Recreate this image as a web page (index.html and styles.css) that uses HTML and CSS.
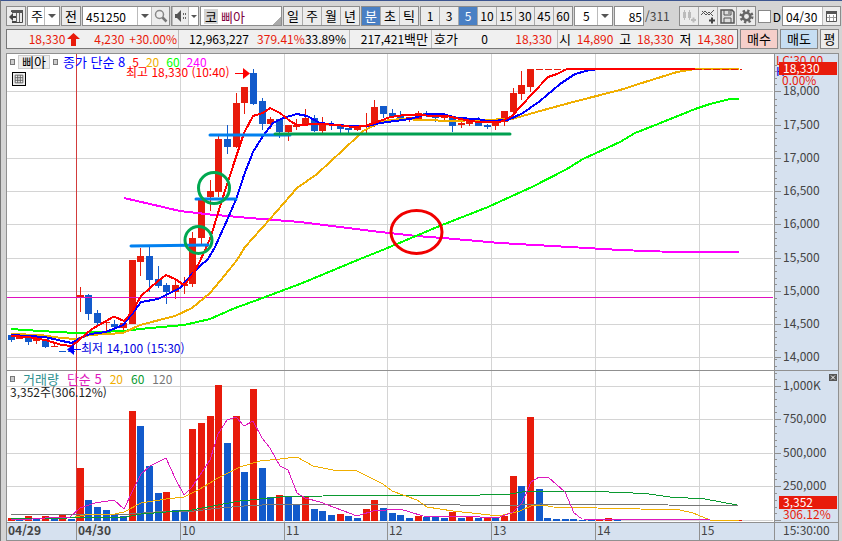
FILE: index.html
```html
<!DOCTYPE html>
<html lang="ko">
<head>
    <meta charset="UTF-8">
    <meta name="viewport" content="width=device-width, initial-scale=1.0">
    <title>삐아 5분 차트</title>
    <link rel="stylesheet" href="styles.css">
</head>
<body>
    <div class="window">
        <!-- 도구 모음 -->
        <div class="toolbar">
            <button class="btn icon-btn first" aria-label="목록 열기">
                <svg width="16" height="16" viewBox="0 0 16 16"><path d="M3.500 4V2.500H14.500V14.500H8" fill="none" stroke="#444" stroke-width="1"/><path d="M4 2h11v3H4z" fill="#555"/><path d="M11.500 5v9M8.500 5v9" stroke="#666"/><path d="M1 9l4-4v8zM5 8h3v2H5zM4 13h4v2H4z" fill="#444"/></svg>
            </button>
            <span class="combo period"><select aria-label="주기"><option>주</option></select></span>
            <button class="btn prev">전</button>
            <span class="code-box">
                <input class="code" type="text" value="451250" aria-label="종목코드">
                <button class="drop" aria-label="종목 목록"></button>
                <button class="flat" aria-label="검색">
                    <svg width="16" height="16" viewBox="0 0 16 16"><circle cx="6.500" cy="6.500" r="4" fill="#eee" stroke="#888" stroke-width="1.500"/><path d="M9.500 9.500l4 4" stroke="#777" stroke-width="2.500"/></svg>
                </button>
            </span>
            <span class="sound-box">
                <button class="flat" aria-label="소리">
                    <svg width="14" height="14" viewBox="0 0 14 14"><path d="M1 5h2l4-4v12L3 9H1z" fill="#555"/><path d="M9 4h1v2H9zM9 8h1v2H9zM11 4h1v2h-1zM11 8h1v2h-1z" fill="#666"/></svg>
                </button>
                <button class="drop small" aria-label="소리 설정"></button>
            </span>
            <span class="stock"><b class="market">코</b><span>삐아</span></span>
            <div class="group">
                <button>일</button><button>주</button><button>월</button><button>년</button>
            </div>
            <div class="group">
                <button class="on">분</button><button>초</button><button>틱</button>
            </div>
            <div class="group nums">
                <button>1</button><button>3</button><button class="on">5</button><button>10</button><button>15</button><button>30</button><button>45</button><button>60</button>
            </div>
            <span class="combo minute"><select aria-label="분 간격"><option>5</option></select></span>
            <input class="count" type="text" value="85" aria-label="표시 봉 수">
            <span class="total">/311</span>
            <div class="group icons">
                <button aria-label="봉 추가">
                    <svg width="17" height="17" viewBox="0 0 17 17"><path d="M3.500 2v10M8.500 2v10" stroke="#bbb"/><path d="M2 4h3v6H2zM7 4h3v6H7z" fill="#bbb"/><path d="M10 12h5M12.500 9.500v5" stroke="#bbb" stroke-width="2"/></svg>
                </button>
                <button aria-label="지표 추가">
                    <svg width="17" height="17" viewBox="0 0 17 17"><path d="M1 7l4-4 4 4 5-5M2 3l4 4 3-3 4 4" fill="none" stroke="#555"/><path d="M9 12.500h6M12 9.500v6" stroke="#444" stroke-width="2"/></svg>
                </button>
                <button aria-label="저장">
                    <svg width="17" height="17" viewBox="0 0 17 17"><path d="M2 2h11l2 2v11H2z" fill="#ddd" stroke="#555" stroke-width="1.500"/><path d="M5 2v5h7V2M5 15v-5h7v5M10 3v3" fill="none" stroke="#555"/></svg>
                </button>
                <button aria-label="설정">
                    <svg width="17" height="17" viewBox="0 0 17 17"><circle cx="8.500" cy="8.500" r="5.500" fill="none" stroke="#666" stroke-width="3" stroke-dasharray="2.200 2.120"/><circle cx="8.500" cy="8.500" r="3.700" fill="none" stroke="#666" stroke-width="2.500"/></svg>
                </button>
            </div>
            <label class="daily"><input type="checkbox">D</label>
            <span class="date-box">
                <input class="date" type="text" value="04/30" aria-label="날짜">
                <button class="flat" aria-label="달력">
                    <svg width="13" height="13" viewBox="0 0 13 13"><path d="M1.500 2.500h10v9h-10z" fill="#fff" stroke="#555"/><path d="M1 1h11v3H1z" fill="#555"/><path d="M2 7.500h9M4.500 5v6M8.500 5v6" stroke="#999"/></svg>
                </button>
            </span>
        </div>

        <!-- 시세 -->
        <div class="quote">
            <div class="quote-box">
                <div class="cell c1">
                    <span class="up price">18,330</span>
                    <svg class="arrow" width="13" height="13" viewBox="0 0 13 13"><path d="M6.500 0L13 6H9v7H4V6H0z" fill="#e81b0b"/></svg>
                    <span class="up diff">4,230</span>
                    <span class="up rate">+30.00%</span>
                </div>
                <div class="cell c2"><span class="volume">12,963,227</span><span class="up">379.41%</span><span>33.89%</span></div>
                <div class="cell c3">217,421<span class="unit">백만</span></div>
                <div class="cell c4"><span class="unit">호가</span><span>0</span><span class="up">18,330</span></div>
                <div class="cell c5">
                    <span class="unit">시</span><span class="up">14,890</span>
                    <span class="unit">고</span><span class="up">18,330</span>
                    <span class="unit">저</span><span class="up">14,380</span>
                </div>
            </div>
            <button class="order buy">매수</button>
            <button class="order sell">매도</button>
            <button class="order avg">평</button>
        </div>

        <!-- 차트 -->
        <div class="chart">
            <svg id="chart" class="chart-svg" viewBox="7 54 831 486" role="img" aria-label="삐아 5분봉 차트">
                <rect class="axis-bg" x="775" y="54" width="63" height="486"/>
                <rect class="axis-bg" x="7" y="522" width="831" height="18"/>
                <g id="grid" shape-rendering="crispEdges"></g>
                <g id="volume" shape-rendering="crispEdges"></g>
                <g id="candles" shape-rendering="crispEdges"></g>
                <path class="level" d="M7 297.500H773" shape-rendering="crispEdges"/>

                <!-- 가격 이동평균 -->
                <g class="ma" shape-rendering="crispEdges">
                    <polyline stroke="#ff00ff" points="124,198 150,204 180,211 210,214.500 250,218 300,222 340,227 380,232 416,236 443,238 500,243 570,247 620,250 660,251.500 739,252"/>
                    <polyline stroke="#00ff00" points="11,329 40,331 76,333 123,331 150,328 184,325 210,319 235,308 260,299 300,284 360,259 385,249 442,225 488,207 532,187 567,169 583,159 620,142 635,133 658,124 695,109 710,104 730,99 739,99"/>
                    <polyline stroke="#f0ae00" points="11,334 40,335 62,338 76,339 90,335 123,333 140,325 175,316 192,308 210,293 225,275 237,260 245,247 270,219 297,188 317,174 357,137 363,131 383,121 400,119 450,121 512,119 540,111 573,102 620,90 645,82 677,72 695,69 739,69"/>
                    <polyline stroke="#0000ff" points="11,335 45,337 62,341 72,343 80,338 90,334 106,332 123,325 132,314 141,302 158,299 166,295 180,288 192,274 200,266 208,259 215,247 228,218 237,197 244,175 253,152 263,136 273,123 283,118 297,114 307,116 320,123 347,126 367,126 380,123 410,119 427,114 443,114 457,118 477,119 488,121 508,120 523,113 540,101 560,84 575,74 590,70 600,69"/>
                    <polyline stroke="#ff0000" points="11,336 28,337 45,340 62,345 72,346 80,339 92,329 106,321 114,316.500 124,321 132,312 141,296 150,288 158,281 166,275 175,279 184,285 192,276 200,261 210,239 215,223 223,197 235,160 244,133 253,116 263,113 270,108 280,113 290,121 297,125 320,124 337,125 353,127 365,126 380,121 390,117 405,115 447,116 460,119 478,122 500,122 512,116 522,105 533,93 548,77 557,74 567,69 695,69"/>
                </g>
                <path class="limit" d="M536 69.500H566M695 69.500H742" shape-rendering="crispEdges"/>

                <!-- 거래량 이동평균 -->
                <g class="vma" shape-rendering="crispEdges">
                    <polyline stroke="#777" points="11,514.500 124,514.500 155,512 190,511.500 220,508 250,505.500 275,504.500 440,504.500 500,506 540,504 597,504.500 738,505.500"/>
                    <polyline stroke="#0a9a30" points="11,518.500 124,517.500 141,514 192,510 218,505 240,501 260,499 280,497 344,495.500 465,495.500 510,494 525,491.500 597,491.500 645,493.500 670,497 705,499 737,505"/>
                    <polyline stroke="#f0ae00" points="75,517 85,515 115,514 124,512 141,503 166,499 184,497 200,489 218,478 240,467 260,461 280,459 297,457 313,466 333,470 357,471 383,484 392,491 417,500 427,507 453,511 490,515 503,515 520,511 531,506 543,505 553,507 597,508 640,509 680,510 693,513 710,520 739,520"/>
                    <polyline stroke="#dd18bd" points="11,519 32,519 45,518 70,517 80,508 95,503 114,500 124,509 133,490 141,474 150,466 166,458 175,478 184,495 192,487 210,460 218,434 227,420 236,417 244,426 253,421 262,438 270,448 280,466 288,470 297,493 305,498 320,502 357,516 373,511 400,509 423,516 480,517 497,518 513,512 522,503 531,482 539,477 548,477 565,492 574,513 582,519 710,520"/>
                </g>

                <!-- 지지·저항선 및 표시 -->
                <g class="mark">
                    <path stroke="#0080f0" d="M131 246L208 245M196 199H236M210 135H290"/>
                    <path stroke="#00a050" d="M275 134H510"/>
                    <circle stroke="#00a850" cx="214" cy="188" r="15.500"/>
                    <circle stroke="#00a850" cx="198.500" cy="240" r="13.500"/>
                    <ellipse stroke="#f00000" cx="416.500" cy="232" rx="25.500" ry="21.500"/>
                </g>
                <path d="M235 73.500h9" stroke="#f00"/><path d="M243 68v11l7-5.500z" fill="#f00"/>
                <text class="label bright" x="126" y="77">최고 18,330 (10:40)</text>
                <path d="M72 349.500h9" stroke="#00f"/><path d="M74 344v11l-7-5.500z" fill="#00f"/>
                <text class="label blue" x="81" y="353">최저 14,100 (15:30)</text>

                <g id="axis"></g>
                <text class="label red" x="776" y="65">LC:30.00</text>
                <text class="label blue" x="776" y="76">H</text>
                <rect class="tag" x="779" y="62" width="58" height="13"/>
                <text class="label white" x="783" y="73">18,330</text>
                <text class="label red" x="782" y="85">0.00%</text>
                <rect class="tag" x="779" y="496" width="58" height="13"/>
                <text class="label white" x="783" y="507">3,352</text>
                <text class="label red" x="783" y="519">306.12%</text>
                <rect x="829" y="374" width="8" height="7" fill="#555"/>
                <path d="M831 375.500l4 4M835 375.500l-4 4" stroke="#fff"/>
            </svg>

            <div class="legend price-legend">
                <i class="dot"></i><button class="name">삐아</button><i class="dot"></i>
                <span class="k-blue">종가 단순 8</span><span class="num k-red">5</span><span class="num k-gold">20</span><span class="num k-lime">60</span><span class="num k-pink">240</span>
            </div>
            <button class="table-btn" aria-label="표 보기">
                <svg width="14" height="14" viewBox="0 0 14 14"><path d="M2.500 2.500h9v9h-9zM2.500 5.500h9M2.500 8.500h9M5.500 2.500v9M8.500 2.500v9" fill="none" stroke="#555"/></svg>
            </button>
            <div class="legend volume-legend">
                <i class="dot"></i>
                <span class="k-teal">거래량</span><span class="k-purple">단순 5</span><span class="num k-gold">20</span><span class="num k-green">60</span><span class="num k-gray">120</span>
            </div>
            <div class="legend volume-value">3,352주(306.12%)</div>
        </div>
    </div>
    <script src="chart.js"></script>
</body>
</html>
```
FILE: styles.css
```css
* {
    box-sizing: border-box;
}

body {
    margin: 0;
    background: #d4d4d4;
    color: #000;
    font-family: "Noto Sans CJK KR", sans-serif;
    font-size: 12px;
}

button,
input,
select {
    margin: 0;
    padding: 0;
    border: 0;
    border-radius: 0;
    background: none;
    color: inherit;
    font: inherit;
}

.window {
    min-height: 100vh;
    padding: 5px 3px 0 6px;
    border-top: 1px solid #3c5590;
    border-left: 1px solid #777;
    overflow: hidden;
}

/* 도구 모음 */
.toolbar {
    display: flex;
    gap: 1px;
    height: 20px;
    margin-left: -1px;
    white-space: nowrap;
}

.toolbar > * {
    flex: none;
}

.toolbar button,
.toolbar select {
    font-size: 13px;
    line-height: 16px;
}

.btn,
.combo,
.code-box,
.sound-box,
.stock,
.count,
.date-box,
.group {
    display: flex;
    height: 20px;
    border: 1px solid #8c8c8c;
    background: #fff;
}

.btn,
.flat,
.group button {
    display: flex;
    align-items: center;
    justify-content: center;
    background: #ececec;
}

.icon-btn {
    width: 20px;
}

.combo {
    position: relative;
}

.combo select {
    width: 100%;
    padding-left: 3px;
    appearance: none;
}

.combo::after,
.drop::after {
    content: "";
    border: 4px solid transparent;
    border-top-color: #555;
    border-bottom: 0;
}

.combo::after {
    position: absolute;
    top: 7px;
    right: 3px;
}

.combo::before {
    content: "";
    position: absolute;
    top: 0;
    right: 14px;
    height: 18px;
    border-left: 1px solid #bbb;
}

.period {
    width: 33px;
}

.prev {
    width: 20px;
}

.code-box {
    width: 88px;
}

.code {
    width: 54px;
    padding-left: 3px;
}

.drop {
    display: flex;
    align-items: center;
    justify-content: center;
    width: 14px;
    border-left: 1px solid #bbb;
}

.drop.small {
    width: 10px;
}

.drop.small::after {
    border-width: 3px;
    border-bottom: 0;
}

.flat {
    flex: 1;
    border-left: 1px solid #bbb;
}

.sound-box {
    width: 28px;
}

.stock {
    align-items: center;
    gap: 3px;
    width: 82px;
    padding-left: 3px;
    color: #800040;
    font-size: 13px;
    background: linear-gradient(135deg, transparent 50%, #aaa 50%) right bottom / 8px 8px no-repeat #fff;
}

.market {
    width: 14px;
    background: #d4d4d4;
    color: #000;
    font-weight: normal;
    line-height: 15px;
    text-align: center;
}

.group button {
    width: 19px;
    border-right: 1px solid #aaa;
}

.group button:last-child {
    width: 18px;
    border-right: 0;
}

.group .on {
    background: #4a80c4;
    color: #fff;
}

.toolbar .nums button {
    font-size: 12px;
}

.minute {
    width: 39px;
}

.minute select {
    padding-left: 8px;
    font-size: 12px;
}

.count {
    width: 30px;
    padding-right: 1px;
    text-align: right;
}

.total {
    width: 33px;
    color: #444;
    line-height: 19px;
}

.daily {
    display: flex;
    align-items: center;
    gap: 2px;
    width: 23px;
    margin-left: 1px;
}

.daily input {
    width: 13px;
    height: 13px;
    border: 1px solid #888;
    background: #fff;
    appearance: none;
}

.date-box {
    width: 59px;
}

.date {
    width: 39px;
    padding-left: 3px;
}

/* 시세 */
.quote {
    display: flex;
    gap: 2px;
    height: 20px;
    margin: 3px 0 4px -1px;
    line-height: 18px;
    white-space: nowrap;
}

.quote-box {
    display: flex;
    flex: 1;
    border: 1px solid #777;
    background: #f0f0f0;
}

.cell {
    display: flex;
    justify-content: space-between;
    padding: 0 3px 0 2px;
    border-left: 1px solid #bbb;
}

.cell:first-child {
    justify-content: flex-end;
    border-left: 0;
}

.c1 {
    width: 171px;
    padding-right: 1px;
}

.c2 {
    width: 171px;
    padding-left: 10px;
}

.volume {
    margin-right: 8px;
}

.c3 {
    justify-content: flex-end;
    width: 82px;
}

.c4 {
    width: 126px;
    padding-right: 5px;
}

.c4 .up {
    margin-left: 4px;
}

.c5 {
    flex: 1;
    padding-left: 1px;
}

.arrow {
    margin: 3px 14px 0 2px;
}

.rate {
    margin-left: 5px;
}

.unit {
    font-size: 13px;
}

.up {
    color: #e81b0b;
}

.order {
    width: 38px;
    border: 1px solid #888;
    font-size: 13px;
    line-height: 16px;
}

.buy {
    background: #f5cfca;
}

.sell {
    background: #c6def3;
}

.avg {
    width: 19px;
    background: #ececec;
}

/* 차트 */
.chart {
    position: relative;
    margin-left: -1px;
    border: 1px solid #909090;
    background: #fff;
}

.chart-svg {
    display: block;
    width: 100%;
    height: auto;
}

.axis-bg {
    fill: #d6e1ef;
}

.grid-line {
    stroke: #d4d4d4;
}

.frame-line {
    stroke: #909090;
}

.day-line {
    stroke: #d23c3c;
}

.level {
    stroke: #e010c0;
}

.bar-up {
    fill: #e81b0b;
    stroke: #e81b0b;
}

.bar-down {
    fill: #125acb;
    stroke: #125acb;
}

.bar-up rect,
.bar-down rect {
    stroke: none;
}

.ma polyline {
    fill: none;
    stroke-width: 2;
    stroke-linejoin: round;
}

.vma polyline {
    fill: none;
    stroke-width: 1;
}

.limit {
    stroke: #e81b0b;
    stroke-dasharray: 7 2;
}

.mark > * {
    fill: none;
    stroke-width: 3;
    stroke-linecap: round;
}

.label {
    fill: #444;
    font-size: 12px;
}

.label.red {
    fill: #e81b0b;
}

.label.bright {
    fill: #ff0000;
}

.label.blue {
    fill: #0000e0;
}

.label.white {
    fill: #fff;
}

.label.day {
    font-weight: bold;
}

.tag {
    fill: #e81b0b;
}

.legend {
    position: absolute;
    left: 3px;
    display: flex;
    align-items: center;
    gap: 8px;
    font-size: 13px;
    line-height: 14px;
    white-space: nowrap;
}

.num {
    font-size: 12px;
}

.price-legend {
    top: 1px;
    gap: 7px;
}

.price-legend .k-blue {
    margin-left: -2px;
}

.volume-legend {
    top: 318px;
}

.volume-value {
    top: 331px;
    color: #222;
    font-size: 12px;
}

.dot {
    width: 5px;
    height: 6px;
    border: 1px solid #777;
    background: #ccc;
}

.name {
    margin: 0 -4px;
    padding: 0 3px;
    border: 1px solid #ccc;
    background: #eee;
    line-height: 12px;
}

.table-btn {
    position: absolute;
    top: 18px;
    left: 5px;
    display: flex;
    border: 1px solid #000;
    background: #eee;
}

.table-btn svg {
    width: 12px;
    height: 12px;
}

.k-blue { color: #0000ff; }
.k-red { color: #ff0000; }
.k-gold { color: #f0ae00; }
.k-lime { color: #00ff00; }
.k-pink { color: #ff00ff; }
.k-teal { color: #2e9090; }
.k-purple { color: #dd18bd; }
.k-green { color: #0a9a30; }
.k-gray { color: #777; }
```
FILE: chart.js
```javascript
// 봉 데이터: [방향, 고가, 몸통 위, 몸통 아래, 저가, 거래량 위]
const bars = [
    ['d', 335, 335, 340, 342, 518], ['u', 333, 335, 339, 339, 519], ['d', 336, 336, 342, 345, 516],
    ['u', 338, 338, 341, 344, 519], ['d', 339, 339, 347, 348, 516], ['u', 342, 346, 347, 347, 518],
    ['d', 351, 351, 352, 352, 515], ['d', 351, 351, 352, 352, 519], ['u', 287, 295, 298, 312, 468],
    ['d', 294, 295, 314, 320, 500], ['d', 310, 313, 323, 326, 507], ['u', 320, 322, 323, 332, 510],
    ['d', 320, 324, 327, 329, 514], ['u', 323, 323, 328, 331, 516], ['u', 260, 260, 324, 324, 411],
    ['u', 248, 256, 262, 276, 426], ['d', 247, 256, 280, 292, 466], ['d', 266, 279, 286, 288, 493],
    ['d', 283, 285, 292, 304, 492], ['u', 278, 285, 292, 299, 510], ['u', 277, 284, 286, 294, 512],
    ['u', 232, 238, 284, 287, 429], ['u', 199, 199, 238, 244, 423], ['u', 180, 191, 197, 211, 416],
    ['u', 136, 139, 192, 197, 385], ['d', 125, 139, 147, 154, 443], ['u', 93, 103, 147, 148, 416],
    ['u', 87, 87, 103, 114, 472], ['d', 69, 73, 104, 105, 389], ['d', 98, 101, 124, 130, 468],
    ['u', 117, 119, 124, 129, 497], ['d', 119, 119, 132, 138, 495], ['u', 125, 125, 132, 141, 496],
    ['u', 119, 125, 127, 130, 504], ['u', 109, 118, 125, 125, 496], ['d', 115, 118, 131, 132, 509],
    ['u', 117, 124, 131, 133, 511], ['d', 121, 124, 125, 130, 515], ['d', 124, 124, 129, 133, 514],
    ['d', 128, 128, 130, 133, 516], ['u', 127, 127, 130, 131, 518], ['u', 113, 125, 127, 133, 509],
    ['u', 100, 107, 125, 127, 500], ['d', 106, 106, 114, 118, 508], ['d', 109, 113, 117, 117, 513],
    ['d', 111, 116, 119, 119, 515], ['u', 117, 117, 119, 122, 518], ['u', 111, 113, 119, 121, 516],
    ['d', 111, 113, 115, 117, 517], ['d', 114, 115, 118, 122, 517], ['u', 115, 116, 118, 122, 518],
    ['d', 116, 116, 126, 132, 512], ['u', 121, 123, 125, 128, 518], ['u', 119, 119, 124, 126, 517],
    ['d', 117, 120, 126, 126, 518], ['d', 124, 125, 127, 129, 517], ['u', 121, 121, 126, 130, 518],
    ['u', 111, 111, 122, 126, 516], ['u', 88, 93, 112, 113, 476], ['u', 71, 85, 94, 100, 486],
    ['u', 69, 69, 87, 92, 417]
];
// 상한가 이후에는 거래량만 표시
const tail = [489, 518, 519, 519, 519, 520, 520, 519, 518, 519];

const NS = 'http://www.w3.org/2000/svg';

function add(parent, tag, attrs, text) {
    const el = document.createElementNS(NS, tag);
    for (const key in attrs) el.setAttribute(key, attrs[key]);
    if (text) el.textContent = text;
    parent.appendChild(el);
    return el;
}

const grid = document.getElementById('grid');
const candles = document.getElementById('candles');
const volume = document.getElementById('volume');
const axis = document.getElementById('axis');

function line(cls, d) {
    add(grid, 'path', { class: cls, d: d });
}

function barX(i) {
    return Math.floor(11 + i * 8.66);
}

function group(parent, up) {
    return add(parent, 'g', { class: up ? 'bar-up' : 'bar-down' });
}

// 격자
const hours = [180, 284, 387, 491, 595, 699];
const prices = [91, 125, 158, 191, 224, 258, 291, 324, 357];
const volumes = [386, 419, 453, 486, 520];
hours.forEach(x => line('grid-line', `M${x + 0.5} 54V522`));
prices.concat(volumes).forEach(y => line('grid-line', `M7 ${y + 0.5}H773`));
line('frame-line', 'M7 370.5H838M7 522.5H838M774.5 54V540M76.5 523V540');
hours.forEach(x => line('frame-line', `M${x + 0.5} 523V540`));

// 축 눈금
function ticks(list, step) {
    list.forEach(y => {
        line('frame-line', `M775 ${y + 0.5}H781`);
        for (let n = 1; n < 5; n++) {
            line('frame-line', `M775 ${Math.round(y - n * step) + 0.5}H777`);
        }
    });
}
ticks(prices, 6.6);
ticks(volumes, 6.7);

// 봉
bars.forEach(([dir, high, top, bottom, low], i) => {
    const x = barX(i);
    const g = group(candles, dir === 'u');
    add(g, 'path', { d: `M${x + 0.5} ${high}V${low}` });
    add(g, 'rect', { x: x - 3, y: top, width: 7, height: bottom - top });
});

// 거래량: 직전 봉보다 많으면 빨강
bars.map(bar => bar[5]).concat(tail).forEach((y, i, all) => {
    const g = group(volume, i === 0 || y < all[i - 1]);
    add(g, 'rect', { x: barX(i) - 3, y: y, width: 7, height: 521 - y });
});
add(group(volume, true), 'rect', { x: 738, y: 520, width: 4, height: 1 });

// 날짜 경계
add(candles, 'path', { class: 'day-line', d: 'M76.5 54V522' });

// 축 글자
['18,000', '17,500', '17,000', '16,500', '16,000', '15,500', '15,000', '14,500', '14,000'].forEach((t, i) => {
    add(axis, 'text', { class: 'label', x: 783, y: prices[i] + 4 }, t);
});
['1,000K', '750,000', '500,000', '250,000'].forEach((t, i) => {
    add(axis, 'text', { class: 'label', x: 783, y: volumes[i] + 4 }, t);
});
['10', '11', '12', '13', '14', '15'].forEach((t, i) => {
    add(axis, 'text', { class: 'label', x: hours[i] + 2, y: 535 }, t);
});
add(axis, 'text', { class: 'label day', x: 8, y: 535 }, '04/29');
add(axis, 'text', { class: 'label day', x: 78, y: 535 }, '04/30');
add(axis, 'text', { class: 'label', x: 783, y: 535 }, '15:30:00');
```
